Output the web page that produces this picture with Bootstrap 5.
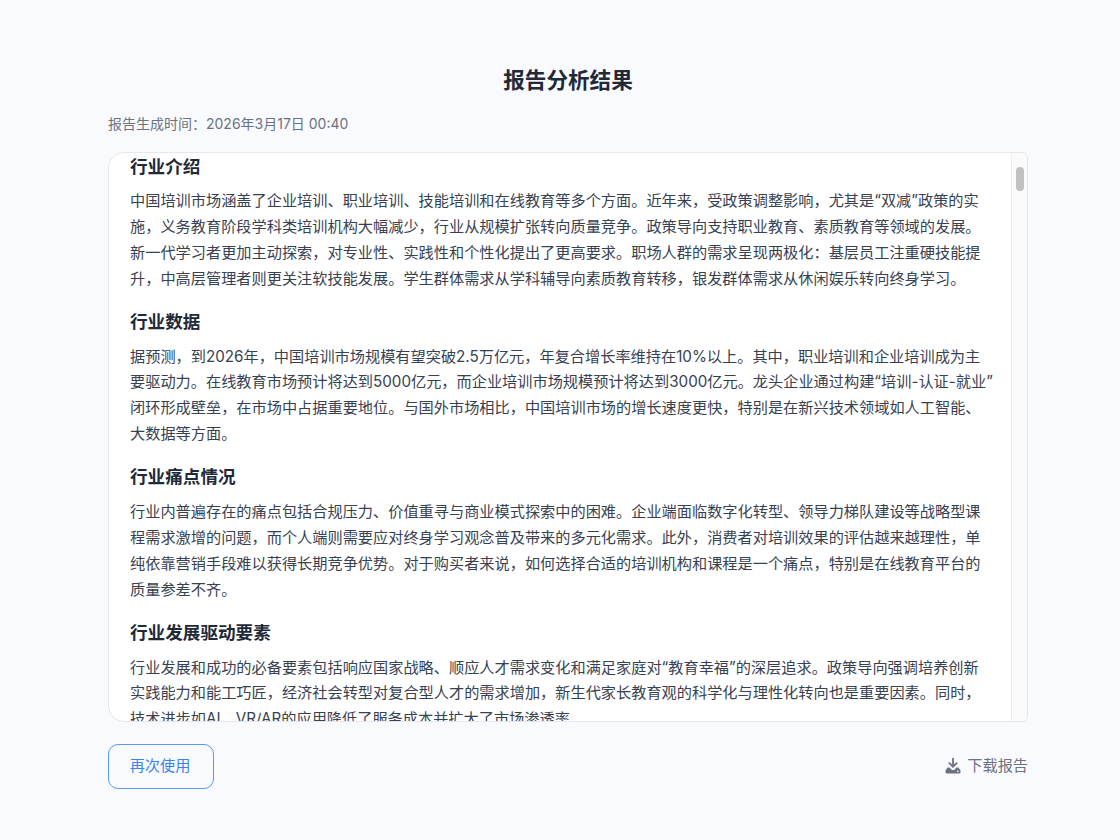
<!DOCTYPE html>
<html lang="zh-CN">
<head>
<meta charset="utf-8">
<link href="https://cdn.jsdelivr.net/npm/bootstrap@5.3.0/dist/css/bootstrap.min.css" rel="stylesheet">
<style>
html,body{height:100%;}
body{margin:0;height:840px;overflow:hidden;background:#f9fafe;font-family:Inter,"Noto Sans CJK SC",sans-serif;color:#1f2937;}
.shell{width:920px;margin-left:108px;height:840px;padding-top:63px;}
.page-title{font-size:21.6px;font-weight:600;line-height:34px;text-align:center;margin:0 0 17px;color:#1f2937;}
.gen-time{font-size:14px;line-height:20px;color:#6b7280;margin:0 0 18px;}
.report-box{height:570px;background:#fff;border:1px solid #e5e7eb;border-radius:16px 6px 6px 16px;overflow:hidden;display:flex;}
.report-text{flex:1;min-width:0;height:100%;overflow:hidden;padding:2.500px 18px 0 21px;}
.report-text h5{font-size:17.6px;font-weight:600;line-height:21px;margin:0 0 11.6px;color:#1f2937;}
.report-text p{font-size:15.2px;line-height:25.84px;margin:0 0 19.5px;color:#374151;}
.track{width:16px;flex:none;background:#fafafa;border-left:1px solid #eee;padding-top:14px;display:flex;justify-content:center;}
.thumb{width:8px;height:24px;border-radius:4px;background:#c1c1c1;}
.again{width:106px;height:45px;border:1.5px solid #5b97f7;border-radius:10px;color:#3b82f6;background:#fff0;font-size:15.2px;padding:0 2px 0 0;}
.again:hover{color:#3b82f6;}
.down{font-size:15.2px;color:#6b7280;gap:6px;padding:0;border:0;}
.foot{margin-top:22px;}
</style>
</head>
<body>
<div class="shell">
  <h1 class="page-title">报告分析结果</h1>
  <div class="gen-time">报告生成时间：2026年3月17日 00:40</div>
  <div class="report-box">
    <div class="report-text">
      <h5>行业介绍</h5>
      <p>中国培训市场涵盖了企业培训、职业培训、技能培训和在线教育等多个方面。近年来，受政策调整影响，尤其是“双减”政策的实施，义务教育阶段学科类培训机构大幅减少，行业从规模扩张转向质量竞争。政策导向支持职业教育、素质教育等领域的发展。新一代学习者更加主动探索，对专业性、实践性和个性化提出了更高要求。职场人群的需求呈现两极化：基层员工注重硬技能提升，中高层管理者则更关注软技能发展。学生群体需求从学科辅导向素质教育转移，银发群体需求从休闲娱乐转向终身学习。</p>
      <h5>行业数据</h5>
      <p>据预测，到2026年，中国培训市场规模有望突破2.5万亿元，年复合增长率维持在10%以上。其中，职业培训和企业培训成为主要驱动力。在线教育市场预计将达到5000亿元，而企业培训市场规模预计将达到3000亿元。龙头企业通过构建“培训-认证-就业”闭环形成壁垒，在市场中占据重要地位。与国外市场相比，中国培训市场的增长速度更快，特别是在新兴技术领域如人工智能、大数据等方面。</p>
      <h5>行业痛点情况</h5>
      <p>行业内普遍存在的痛点包括合规压力、价值重寻与商业模式探索中的困难。企业端面临数字化转型、领导力梯队建设等战略型课程需求激增的问题，而个人端则需要应对终身学习观念普及带来的多元化需求。此外，消费者对培训效果的评估越来越理性，单纯依靠营销手段难以获得长期竞争优势。对于购买者来说，如何选择合适的培训机构和课程是一个痛点，特别是在线教育平台的质量参差不齐。</p>
      <h5>行业发展驱动要素</h5>
      <p>行业发展和成功的必备要素包括响应国家战略、顺应人才需求变化和满足家庭对“教育幸福”的深层追求。政策导向强调培养创新实践能力和能工巧匠，经济社会转型对复合型人才的需求增加，新生代家长教育观的科学化与理性化转向也是重要因素。同时，技术进步如AI、VR/AR的应用降低了服务成本并扩大了市场渗透率。</p>
    </div>
    <div class="track"><div class="thumb"></div></div>
  </div>
  <div class="d-flex justify-content-between align-items-center foot">
    <button type="button" class="btn again">再次使用</button>
    <button type="button" class="btn down d-flex align-items-center">
      <svg width="16" height="16" viewBox="0 0 16 16" fill="#6b7280"><path d="M7.1 0h1.8v6.6L11.6 4l1.2 1.2L8 10 3.2 5.2 4.4 4l2.7 2.6z"/><path fill-rule="evenodd" d="M2.5 9.5h2L7 12h2l2.5-2.5h2L15.5 12.5V14a1.5 1.5 0 0 1-1.5 1.5H2A1.5 1.5 0 0 1 .5 14v-1.500zM12.800 12.600a.8.8 0 1 0 0 1.600.8.8 0 0 0 0-1.600z"/></svg>
      <span>下载报告</span>
    </button>
  </div>
</div>
<script src="https://cdn.jsdelivr.net/npm/bootstrap@5.3.0/dist/js/bootstrap.bundle.min.js"></script>
</body>
</html>
